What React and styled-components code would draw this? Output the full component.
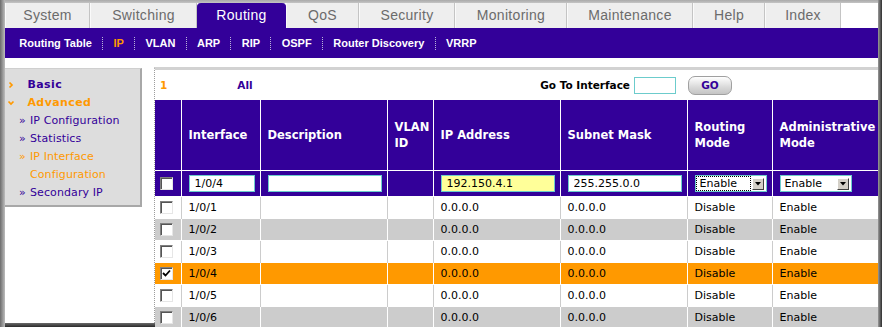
import styled, { createGlobalStyle } from "styled-components";

const PURPLE = "#330099";
const ORANGE = "#ff9900";
const VERDANA = `"DejaVu Sans", Verdana, sans-serif`;
const ROUND = `"Liberation Sans", Arial, sans-serif`;

const tabs = [
  { label: "System", w: 85 },
  { label: "Switching", w: 107 },
  { label: "Routing", w: 89, active: true },
  { label: "QoS", w: 73 },
  { label: "Security", w: 96 },
  { label: "Monitoring", w: 112 },
  { label: "Maintenance", w: 126 },
  { label: "Help", w: 72 },
  { label: "Index", w: 76 },
];

const subLinks = ["Routing Table", "IP", "VLAN", "ARP", "RIP", "OSPF", "Router Discovery", "VRRP"];

const columns = [
  { label: "", w: 26 },
  { label: "Interface", w: 79 },
  { label: "Description", w: 127 },
  { label: "VLAN ID", w: 46 },
  { label: "IP Address", w: 127 },
  { label: "Subnet Mask", w: 127 },
  { label: "Routing Mode", w: 85 },
  { label: "Administrative Mode", w: 106 },
];

const rows = [
  { port: "1/0/1", tone: "white" },
  { port: "1/0/2", tone: "gray" },
  { port: "1/0/3", tone: "white" },
  { port: "1/0/4", tone: "orange", checked: true },
  { port: "1/0/5", tone: "white" },
  { port: "1/0/6", tone: "gray" },
];

const toneBg = { white: "#ffffff", gray: "#cccccc", orange: ORANGE };
const toneLine = { white: "#cccccc", gray: "#ffffff", orange: "#ffffff" };

const GlobalStyle = createGlobalStyle`
  html, body { margin: 0; padding: 0; background: #fff; }
  body { font-family: ${VERDANA}; }
`;

const Frame = styled.div`
  width: 882px;
  height: 327px;
  box-sizing: border-box;
  padding: 0 4px 4px 5px;
  overflow: hidden;
  display: flex;
  flex-direction: column;
  background:
    linear-gradient(to right, #6c6c6c, #bdbdbd) left top / 5px 100% no-repeat,
    linear-gradient(to right, #9a9a9a, #2e2e2e) right top / 4px 100% no-repeat,
    linear-gradient(#6a6a6a, #2a2a2a) left bottom / 100% 4px no-repeat,
    #fff;
`;

const TabBar = styled.div`
  height: 28px;
  flex-shrink: 0;
  display: flex;
  align-items: flex-end;
  background: linear-gradient(#a9a9a9, #c4c4c4) left top / 100% 3px no-repeat, #fff;
`;

const Tab = styled.div`
  width: ${(p) => p.$w}px;
  height: 25px;
  box-sizing: border-box;
  text-align: center;
  line-height: 25px;
  font-family: ${ROUND};
  font-size: 14px;
  letter-spacing: 0.3px;
  color: ${(p) => (p.$active ? "#fff" : "#6b6b6b")};
  background: ${(p) => (p.$active ? PURPLE : "#eeeeee")};
  border-left: 1px solid ${(p) => (p.$active ? PURPLE : "#fafafa")};
  border-right: 1px solid ${(p) => (p.$active ? PURPLE : "#c4c4c4")};
  border-radius: ${(p) => (p.$active ? "4px 4px 0 0" : "0")};
`;

const SubNav = styled.div`
  height: 30px;
  flex-shrink: 0;
  display: flex;
  align-items: center;
  padding-left: 4px;
  background: ${PURPLE};
`;

const SubLink = styled.span`
  padding: 0 10.3px;
  font-family: ${ROUND};
  font-weight: bold;
  font-size: 11px;
  color: ${(p) => (p.$active ? ORANGE : "#fff")};
`;

const SubSep = styled.span`
  width: 0;
  height: 13px;
  border-left: 1px dotted #b9b3d9;
`;

const Body = styled.div`
  flex: 1;
  min-height: 0;
  display: flex;
  align-items: flex-start;
  padding-top: 10px;
`;

const Sidebar = styled.div`
  width: 137px;
  height: 139px;
  flex-shrink: 0;
  box-sizing: border-box;
  padding: 7px 0 0 2px;
  background: #dddddd;
  border-top: 1px solid #cfcfcf;
  border-right: 2px solid #a8a8a8;
  border-bottom: 2px solid #a8a8a8;
  font-size: 11px;
  line-height: 18px;
`;

const SideHead = styled.div`
  display: flex;
  align-items: center;
  font-weight: bold;
  letter-spacing: 0.4px;
  color: ${(p) => (p.$active ? ORANGE : PURPLE)};
`;

const ChevronBox = styled.span`
  width: 12px;
  display: flex;
  align-items: center;
`;

const SideItem = styled.div`
  display: flex;
  padding-left: 12px;
  color: ${(p) => (p.$active ? ORANGE : PURPLE)};
  letter-spacing: 0.1px;
`;

const Bullet = styled.span`
  width: 11px;
  flex-shrink: 0;
`;

const Main = styled.div`
  flex: 1;
  margin-left: 12px;
  margin-top: -1px;
  border-top: 3px solid #d2d2d2;
  border-left: 1px dotted #9c9c9c;
  align-self: stretch;
`;

const Pager = styled.div`
  height: 30px;
  display: flex;
  align-items: center;
  padding-left: 5px;
  font-size: 10.5px;
  font-weight: bold;
`;

const PageLink = styled.span`
  color: ${(p) => (p.$current ? ORANGE : PURPLE)};
  margin-left: ${(p) => p.$gap || 0}px;
`;

const GoGroup = styled.div`
  margin-left: auto;
  margin-right: 146px;
  display: flex;
  align-items: center;
  color: #000;
`;

const GoInput = styled.input`
  width: 42px;
  height: 17px;
  box-sizing: border-box;
  margin: 0 0 0 4px;
  border: 1px solid #6ccccc;
  padding: 0;
`;

const GoButton = styled.button`
  width: 44px;
  height: 19px;
  margin-left: 12px;
  padding: 0;
  border: 1px solid #a0a0a0;
  border-radius: 7px;
  background: linear-gradient(#ffffff, #d9d9d9 60%, #c4c4c4);
  color: ${PURPLE};
  font-family: ${VERDANA};
  font-size: 10.5px;
  font-weight: bold;
`;

const Table = styled.table`
  width: 723px;
  table-layout: fixed;
  border-collapse: collapse;
  font-size: 11px;
`;

const HeadCell = styled.th`
  height: 70px;
  padding: 0 7px;
  background: ${PURPLE};
  color: #fff;
  text-align: left;
  vertical-align: middle;
  font-size: 11.5px;
  line-height: 16px;
  font-weight: bold;
  border-left: 1px solid #fff;
  border-bottom: 1px solid #fff;
  &:first-child { border-left: none; }
`;

const EditCell = styled.td`
  height: 25px;
  padding: 0 0 0 ${(p) => (p.$box ? 5 : 7)}px;
  background: ${PURPLE};
  border-left: 1px solid #fff;
  &:first-child { border-left: none; }
`;

const Cell = styled.td`
  height: 21px;
  padding: 0 0 0 ${(p) => (p.$box ? 5 : 7)}px;
  background: ${(p) => toneBg[p.$tone]};
  border-left: 1px solid ${(p) => toneLine[p.$tone]};
  border-top: 1px solid #fff;
  color: #000;
  white-space: nowrap;
  &:first-child { border-left: none; }
`;

const TextInput = styled.input`
  display: block;
  width: ${(p) => p.$w}px;
  height: 17px;
  box-sizing: border-box;
  margin: 0;
  padding: 0 0 0 5px;
  border: 1px solid #6ccccc;
  background: ${(p) => p.$bg || "#fff"};
  font-family: ${VERDANA};
  font-size: 11px;
  color: #000;
`;

const CheckBox = styled.span`
  display: flex;
  align-items: center;
  justify-content: center;
  width: 13px;
  height: 13px;
  box-sizing: border-box;
  background: #fff;
  border: 1px solid;
  border-color: #808080 #e6e6e6 #e6e6e6 #808080;
  box-shadow: inset 1px 1px #555;
`;

const SelectBox = styled.div`
  width: 72px;
  height: 17px;
  box-sizing: border-box;
  display: flex;
  align-items: center;
  padding: 1px 2px 1px 1px;
  border: 1px solid #6ccccc;
  background: #fff;
`;

const SelectValue = styled.span`
  flex: 1;
  height: 13px;
  line-height: 13px;
  padding-left: 3px;
  margin-right: 2px;
  font-size: 11px;
  color: #000;
  outline: ${(p) => (p.$focused ? "1px dotted #000" : "none")};
`;

const SelectArrow = styled.span`
  width: 12px;
  height: 12px;
  box-sizing: border-box;
  display: flex;
  align-items: center;
  justify-content: center;
  background: #d4d0c8;
  border: 1px solid;
  border-color: #fff #404040 #404040 #fff;
`;

const Chevron = ({ down }) => (
  <ChevronBox>
    <svg width="8" height="8" viewBox="0 0 8 8">
      <path
        d={down ? "M1.5 2.5 L4 5 L6.5 2.5" : "M2.5 1.5 L5 4 L2.5 6.5"}
        fill="none"
        stroke={ORANGE}
        strokeWidth="1.7"
      />
    </svg>
  </ChevronBox>
);

const Check = ({ checked }) => (
  <CheckBox>
    {checked && (
      <svg width="9" height="9" viewBox="0 0 9 9">
        <path d="M1 4 L3.5 6.5 L8 1.5" fill="none" stroke="#000" strokeWidth="1.8" />
      </svg>
    )}
  </CheckBox>
);

const Select = ({ value, focused }) => (
  <SelectBox>
    <SelectValue $focused={focused}>{value}</SelectValue>
    <SelectArrow>
      <svg width="6" height="4" viewBox="0 0 6 4">
        <path d="M0 0 L6 0 L3 3.5 Z" fill="#000" />
      </svg>
    </SelectArrow>
  </SelectBox>
);

export default function App() {
  return (
    <Frame>
      <GlobalStyle />
      <TabBar>
        {tabs.map((t) => (
          <Tab key={t.label} $w={t.w} $active={t.active}>
            {t.label}
          </Tab>
        ))}
      </TabBar>
      <SubNav>
        {subLinks.map((l, i) => [
          i > 0 && <SubSep key={l + "-sep"} />,
          <SubLink key={l} $active={l === "IP"}>
            {l}
          </SubLink>,
        ])}
      </SubNav>
      <Body>
        <Sidebar>
          <SideHead>
            <Chevron />
            <span>&nbsp;&nbsp;Basic</span>
          </SideHead>
          <SideHead $active>
            <Chevron down />
            <span>&nbsp;&nbsp;Advanced</span>
          </SideHead>
          <SideItem>
            <Bullet>»</Bullet>
            <span>IP Configuration</span>
          </SideItem>
          <SideItem>
            <Bullet>»</Bullet>
            <span>Statistics</span>
          </SideItem>
          <SideItem $active>
            <Bullet>»</Bullet>
            <span>IP Interface Configuration</span>
          </SideItem>
          <SideItem>
            <Bullet>»</Bullet>
            <span>Secondary IP</span>
          </SideItem>
        </Sidebar>
        <Main>
          <Pager>
            <PageLink $current>1</PageLink>
            <PageLink $gap={70}>All</PageLink>
            <GoGroup>
              Go To Interface
              <GoInput readOnly />
              <GoButton>GO</GoButton>
            </GoGroup>
          </Pager>
          <Table>
            <colgroup>
              {columns.map((c, i) => (
                <col key={i} style={{ width: c.w }} />
              ))}
            </colgroup>
            <thead>
              <tr>
                {columns.map((c, i) => (
                  <HeadCell key={i}>{c.label}</HeadCell>
                ))}
              </tr>
            </thead>
            <tbody>
              <tr>
                <EditCell $box>
                  <Check />
                </EditCell>
                <EditCell>
                  <TextInput $w={66} readOnly value="1/0/4" />
                </EditCell>
                <EditCell>
                  <TextInput $w={114} readOnly value="" />
                </EditCell>
                <EditCell />
                <EditCell>
                  <TextInput $w={114} $bg="#ffff99" readOnly value="192.150.4.1" />
                </EditCell>
                <EditCell>
                  <TextInput $w={114} readOnly value="255.255.0.0" />
                </EditCell>
                <EditCell>
                  <Select value="Enable" focused />
                </EditCell>
                <EditCell>
                  <Select value="Enable" />
                </EditCell>
              </tr>
              {rows.map((r) => (
                <tr key={r.port}>
                  <Cell $tone={r.tone} $box>
                    <Check checked={r.checked} />
                  </Cell>
                  <Cell $tone={r.tone}>{r.port}</Cell>
                  <Cell $tone={r.tone} />
                  <Cell $tone={r.tone} />
                  <Cell $tone={r.tone}>0.0.0.0</Cell>
                  <Cell $tone={r.tone}>0.0.0.0</Cell>
                  <Cell $tone={r.tone}>Disable</Cell>
                  <Cell $tone={r.tone}>Enable</Cell>
                </tr>
              ))}
            </tbody>
          </Table>
        </Main>
      </Body>
    </Frame>
  );
}
